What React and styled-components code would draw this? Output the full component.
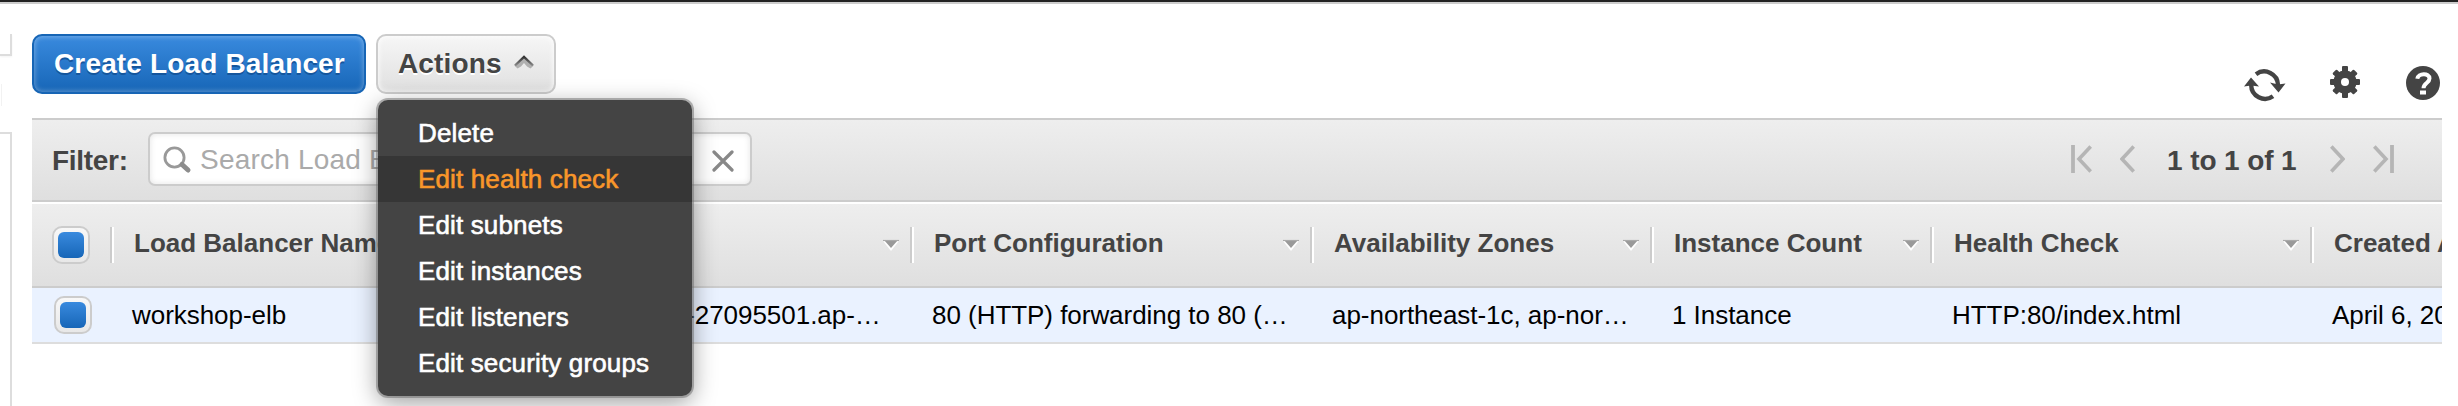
import React from "react";
import styled, { createGlobalStyle } from "styled-components";

const GlobalStyle = createGlobalStyle`
  *, *::before { box-sizing: border-box; }
  body {
    margin: 0;
    background: #fff;
    color: #444;
    font-family: "Liberation Sans", Arial, sans-serif;
    overflow: hidden;
  }
`;

const Page = styled.div`
  height: 406px;
  display: flex;
  flex-direction: column;
  overflow: hidden;
  &::before {
    content: "";
    flex: none;
    height: 4px;
    background: #222;
    border-bottom: 2px solid #ccc;
  }
`;

const Body = styled.div`
  flex: 1;
  display: flex;
  min-height: 0;
`;

const Sidebar = styled.div`
  width: 12px;
  margin-right: 20px;
  padding-top: 30px;
  display: flex;
  flex-direction: column;
`;

const SidebarTop = styled.div`
  height: 22px;
  border: solid #ddd;
  border-width: 0 2px 2px 0;
  box-shadow: 0 1px 2px #f3f3f3;
`;

const SidebarHandle = styled.div`
  width: 2px;
  height: 22px;
  margin: 28px 0 26px;
  border-right: 1px solid #f2f2f2;
`;

const SidebarPanel = styled.div`
  flex: 1;
  border: solid #ddd;
  border-width: 2px 2px 0 0;
`;

const Main = styled.main`
  width: 2410px;
  display: flex;
  flex-direction: column;
`;

const Toolbar = styled.div`
  height: 114px;
  padding-top: 30px;
  display: flex;
  align-items: flex-start;
  gap: 10px;
`;

const Button = styled.button`
  width: ${(p) => p.$width}px;
  height: 60px;
  padding: 0 0 0 20px;
  display: flex;
  align-items: center;
  font: bold 28px/56px "Liberation Sans", Arial, sans-serif;
  letter-spacing: 0.15px;
  white-space: nowrap;
  border-radius: 10px;
  border: 2px solid ${(p) => (p.$primary ? "#1765b5" : "#ccc")};
  color: ${(p) => (p.$primary ? "#fff" : "#444")};
  background: ${(p) =>
    p.$primary
      ? "linear-gradient(#398ade, #1766b7)"
      : "linear-gradient(#f6f6f6, #e0e0e0)"};
  box-shadow: inset 0 0 5px 1px
    ${(p) => (p.$primary ? "rgba(255,255,255,.3)" : "rgba(255,255,255,.8)")};
  text-shadow: 0 2px 0 ${(p) => (p.$primary ? "#15569d" : "#fff")};
  svg { margin-left: 12px; margin-top: -4px; }
`;

const MenuAnchor = styled.div`
  position: relative;
`;

const Menu = styled.ul`
  position: absolute;
  z-index: 5;
  top: 66px;
  left: 2px;
  width: 314px;
  margin: 0;
  padding: 10px 0;
  list-style: none;
  background: #444;
  border-radius: 10px;
  box-shadow: 0 0 0 2px rgba(110, 110, 110, 0.5), 0 6px 24px rgba(0, 0, 0, 0.4);
`;

const MenuItem = styled.li`
  height: 46px;
  padding-left: 40px;
  font-size: 26px;
  line-height: 46px;
  letter-spacing: 0.14px;
  white-space: nowrap;
  color: ${(p) => (p.$active ? "#f9962a" : "#fff")};
  background: ${(p) => (p.$active ? "#363636" : "transparent")};
  -webkit-text-stroke: 0.6px currentColor;
`;

const ToolIcons = styled.div`
  margin: 32px 2px 0 auto;
  display: flex;
  align-items: flex-start;
  svg { flex: none; }
  svg:first-child { margin-top: 2px; }
  svg + svg { margin-left: 44px; }
  svg:last-child { margin-left: 46px; }
`;

const FilterBar = styled.div`
  height: 84px;
  padding: 0 48px 0 20px;
  display: flex;
  align-items: center;
  border: solid #ccc;
  border-width: 2px 0;
  background: linear-gradient(#eee, #dfdfdf);
  font-size: 28px;
  font-weight: bold;
`;

const FilterLabel = styled.label`
  width: 96px;
  padding-top: 2px;
  line-height: 32px;
  letter-spacing: -0.3px;
`;

const SearchBox = styled.div`
  width: 604px;
  height: 54px;
  margin-bottom: 2px;
  padding: 0 16px 0 13px;
  display: flex;
  align-items: center;
  background: #fff;
  border: 2px solid #ccc;
  border-radius: 7px;
  box-shadow: inset 0 0 6px #e4e4e4;
  color: #aaa;
  font-weight: normal;
  svg { margin-top: 4px; }
`;

const Placeholder = styled.span`
  flex: 1;
  margin-left: 7px;
  padding-top: 2px;
  line-height: 32px;
  letter-spacing: 0.2px;
`;

const Pager = styled.div`
  margin-left: auto;
  display: flex;
  align-items: center;
  gap: 28px;
  svg { margin-bottom: 2px; }
`;

const PagerText = styled.span`
  width: 139px;
  padding: 2px 0 0 4px;
  letter-spacing: -0.1px;
  white-space: nowrap;
`;

const columns = "78px 400px 400px 400px 340px 280px 380px 132px";

const HeaderRow = styled.div`
  height: 86px;
  display: grid;
  grid-template-columns: ${columns};
  align-items: center;
  border-top: 2px solid #fff;
  border-bottom: 2px solid #ccc;
  background: linear-gradient(#eee, #dfdfdf);
  overflow: hidden;
`;

const HeaderCell = styled.div`
  height: 36px;
  padding: 0 11px 0 20px;
  display: flex;
  align-items: center;
  justify-content: space-between;
  border-left: 2px solid #ccc;
  box-shadow: inset 2px 0 #fff;
  font-size: 26px;
  font-weight: bold;
  line-height: 34px;
  white-space: nowrap;
  overflow: hidden;
  span { padding-left: 2px; margin-top: -5px; }
`;

const DataRow = styled.div`
  height: 56px;
  display: grid;
  grid-template-columns: ${columns};
  align-items: center;
  background: #eaf2ff;
  border-bottom: 2px solid #ddd;
  color: #000;
  overflow: hidden;
`;

const DataCell = styled.div`
  padding-left: 22px;
  font-size: 26px;
  line-height: 50px;
  letter-spacing: -0.04px;
  white-space: nowrap;
  overflow: hidden;
`;

const Checkbox = styled.div`
  width: 38px;
  height: 38px;
  margin-left: ${(p) => p.$offset}px;
  padding: 4px;
  border: 2px solid #ccc;
  border-radius: 10px;
  background: linear-gradient(#f8f8f8, #e8e8e8);
  &::before {
    content: "";
    display: block;
    height: 26px;
    border-radius: 6px;
    background: linear-gradient(#398ade, #1766b7);
  }
`;

const ChevronUp = () => (
  <svg width="20" height="14" viewBox="0 0 20 14">
    <defs>
      <linearGradient id="chev" x1="0" y1="0" x2="0" y2="1">
        <stop offset="0" stopColor="#333" />
        <stop offset="1" stopColor="#888" />
      </linearGradient>
    </defs>
    <path d="M10 1 19.6 10.5 16.5 13.5 13 11.5 10 8 7 11.5 3.5 13.5 .4 10.5z" fill="#b0b0b0" />
    <path d="M1 10.5 10 2l9 8.5" fill="none" stroke="url(#chev)" strokeWidth="2.4" />
  </svg>
);

const RefreshIcon = () => (
  <svg width="42" height="34" viewBox="0 0 42 34">
    <g fill="none" stroke="#444" strokeWidth="4.4">
      <path d="M12 6.2A13.8 13.8 0 0 1 34 17" />
      <path d="M29 28.2A13.8 13.8 0 0 1 7.2 17" />
    </g>
    <path d="M26 14.5 34 16.5 41.5 15.5 34.5 24.5z" fill="#444" />
    <path d="M7 9.5 15 18.5 7 17.5 0 18.5z" fill="#444" />
  </svg>
);

const GearIcon = () => (
  <svg width="30" height="32" viewBox="-15 -16 30 32">
    <g fill="#444">
      {[0, 45, 90, 135].map((a) => (
        <rect key={a} x="-3" y={a === 0 ? -16 : -15} width="6" height={a === 0 ? 32 : 30} rx="1" transform={`rotate(${a})`} />
      ))}
      <circle r="11.6" />
    </g>
    <circle r="4" fill="#fff" />
  </svg>
);

const HelpIcon = () => (
  <svg width="34" height="34" viewBox="0 0 34 34">
    <circle cx="17" cy="17" r="17" fill="#444" />
    <path d="M11.3 12.8C12 7 23.5 6.5 23.5 12.5c0 4.5-6 4.5-6 9.7" fill="none" stroke="#fff" strokeWidth="4" />
    <rect x="14" y="24.5" width="6" height="4" fill="#fff" />
  </svg>
);

const SearchIcon = () => (
  <svg width="30" height="30" viewBox="0 0 30 30">
    <circle cx="11.5" cy="11.5" r="9.6" fill="none" stroke="#999" strokeWidth="2.8" />
    <path d="m19 18.5 6 5.5" stroke="#8c8c8c" strokeWidth="5" strokeLinecap="round" />
  </svg>
);

const ClearIcon = () => (
  <svg width="22" height="22" viewBox="0 0 22 22">
    <path d="m2 2 18 18M20 2 2 20" stroke="#888" strokeWidth="3.2" strokeLinecap="round" />
  </svg>
);

const PageArrow = ({ next, end }) => (
  <svg width={end ? 21 : 15} height="28" viewBox={end ? "-6 0 21 28" : "0 0 15 28"}>
    <g transform={next ? (end ? "translate(9 0) scale(-1 1)" : "translate(15 0) scale(-1 1)") : undefined}>
      <path d="M13.7 1.5 2 14l11.7 12.5" fill="none" stroke="#b5b5b5" strokeWidth="3.6" />
      {end && <path d="M-4 0v28" stroke="#b5b5b5" strokeWidth="3.8" />}
    </g>
  </svg>
);

const SortArrow = () => (
  <svg width="16" height="12" viewBox="0 0 16 12">
    <path d="M0 2h16L8 12z" fill="#fff" />
    <path d="M1 1h14L8 9z" fill="#999" />
    <path d="M0 1.5h16" stroke="#aaa" strokeWidth="1.2" />
  </svg>
);

const actions = [
  "Delete",
  "Edit health check",
  "Edit subnets",
  "Edit instances",
  "Edit listeners",
  "Edit security groups",
];

const headers = [
  "Load Balancer Name",
  "DNS Name",
  "Port Configuration",
  "Availability Zones",
  "Instance Count",
  "Health Check",
  "Created At",
];

const cells = [
  "workshop-elb",
  "workshop-elb-27095501.ap-…",
  "80 (HTTP) forwarding to 80 (…",
  "ap-northeast-1c, ap-nor…",
  "1 Instance",
  "HTTP:80/index.html",
  "April 6, 2017",
];

export default function App() {
  return (
    <Page>
      <GlobalStyle />
      <Body>
        <Sidebar>
          <SidebarTop />
          <SidebarHandle />
          <SidebarPanel />
        </Sidebar>
        <Main>
          <Toolbar>
            <Button $primary $width={334}>
              <span>Create Load Balancer</span>
            </Button>
            <MenuAnchor>
              <Button $width={180}>
                <span>Actions</span>
                <ChevronUp />
              </Button>
              <Menu>
                {actions.map((label) => (
                  <MenuItem key={label} $active={label === "Edit health check"}>
                    {label}
                  </MenuItem>
                ))}
              </Menu>
            </MenuAnchor>
            <ToolIcons>
              <RefreshIcon />
              <GearIcon />
              <HelpIcon />
            </ToolIcons>
          </Toolbar>
          <FilterBar>
            <FilterLabel>Filter:</FilterLabel>
            <SearchBox>
              <SearchIcon />
              <Placeholder>Search Load Balancers</Placeholder>
              <ClearIcon />
            </SearchBox>
            <Pager>
              <PageArrow end />
              <PageArrow />
              <PagerText>1 to 1 of 1</PagerText>
              <PageArrow next />
              <PageArrow next end />
            </Pager>
          </FilterBar>
          <HeaderRow>
            <Checkbox $offset={20} />
            {headers.map((label) => (
              <HeaderCell key={label}>
                <span>{label}</span>
                {label !== "Created At" && <SortArrow />}
              </HeaderCell>
            ))}
          </HeaderRow>
          <DataRow>
            <Checkbox $offset={22} />
            {cells.map((text) => (
              <DataCell key={text}>{text}</DataCell>
            ))}
          </DataRow>
        </Main>
      </Body>
    </Page>
  );
}
